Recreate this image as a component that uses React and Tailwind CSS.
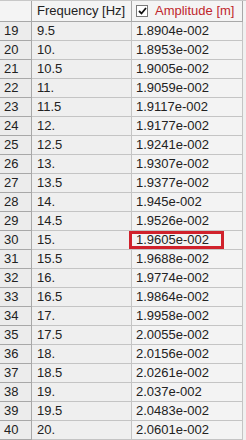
import React from 'react';

const rows = [
  [19, '9.5', '1.8904e-002'],
  [20, '10.', '1.8953e-002'],
  [21, '10.5', '1.9005e-002'],
  [22, '11.', '1.9059e-002'],
  [23, '11.5', '1.9117e-002'],
  [24, '12.', '1.9177e-002'],
  [25, '12.5', '1.9241e-002'],
  [26, '13.', '1.9307e-002'],
  [27, '13.5', '1.9377e-002'],
  [28, '14.', '1.945e-002'],
  [29, '14.5', '1.9526e-002'],
  [30, '15.', '1.9605e-002'],
  [31, '15.5', '1.9688e-002'],
  [32, '16.', '1.9774e-002'],
  [33, '16.5', '1.9864e-002'],
  [34, '17.', '1.9958e-002'],
  [35, '17.5', '2.0055e-002'],
  [36, '18.', '2.0156e-002'],
  [37, '18.5', '2.0261e-002'],
  [38, '19.', '2.037e-002'],
  [39, '19.5', '2.0483e-002'],
  [40, '20.', '2.0601e-002'],
];

export default function App() {
  return (
    <div className="w-[246px] h-[440px] overflow-hidden bg-[#f0f0f0] text-[13px] text-[#222] font-['Liberation_Sans',Arial,sans-serif]">
      {/* header */}
      <div className="flex h-[22px] border-t border-[#c8c8c8] bg-[#f4f4f4]">
        <div className="w-[32px] shrink-0 border-r border-b border-[#a8a8a8]"></div>
        <div className="w-[100px] shrink-0 border-r border-b border-[#a8a8a8] flex items-center pl-[5px]">
          Frequency [Hz]
        </div>
        <div className="w-[111px] shrink-0 border-r border-b border-[#a8a8a8] flex items-center pl-[4px] gap-[7px]">
          <span className="w-[12px] h-[12px] border border-[#7a7a7a] bg-white flex items-center justify-center">
            <svg width="9" height="8" viewBox="0 0 9 8">
              <path d="M1 4 L3.5 6.5 L8 1" fill="none" stroke="#111" strokeWidth="1.8" />
            </svg>
          </span>
          <span className="text-[#c0272d]">Amplitude [m]</span>
        </div>
      </div>

      {rows.map(([n, f, a]) => (
        <div key={n} className="flex h-[19px]">
          <div className="w-[32px] shrink-0 border-r border-b border-[#a8a8a8] bg-[#ececec] flex items-center pl-[4px]">
            {n}
          </div>
          <div className="w-[100px] shrink-0 border-r border-b border-[#c4c4c4] bg-[#efefef] flex items-center pl-[5px]">
            {f}
          </div>
          <div className="relative w-[111px] shrink-0 border-r border-b border-[#c4c4c4] bg-[#f3f3f3] flex items-center pl-[4px]">
            {a}
            {n === 30 && (
              <div className="absolute left-[-3px] top-0 w-[95px] h-[18px] border-[3px] border-[#d0212b]"></div>
            )}
          </div>
        </div>
      ))}
    </div>
  );
}
